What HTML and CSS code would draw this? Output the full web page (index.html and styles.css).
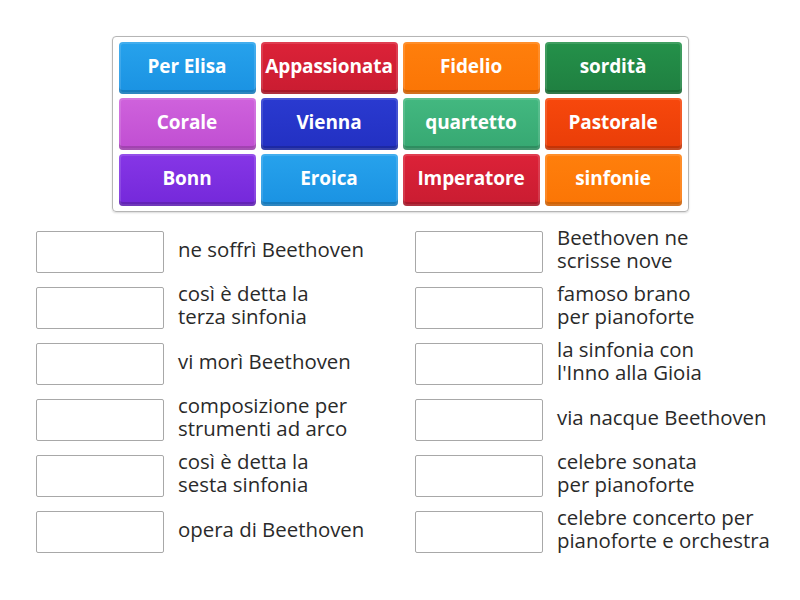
FILE: index.html
```html
<!DOCTYPE html>
<html lang="it">
<head>
<meta charset="utf-8">
<link rel="stylesheet" href="styles.css">
</head>
<body>
<div class="page">
  <div class="bank">
    <div class="tile blue">Per Elisa</div>
    <div class="tile red">Appassionata</div>
    <div class="tile orange">Fidelio</div>
    <div class="tile dgreen">sordità</div>
    <div class="tile pink">Corale</div>
    <div class="tile navy">Vienna</div>
    <div class="tile mint">quartetto</div>
    <div class="tile vermilion">Pastorale</div>
    <div class="tile violet">Bonn</div>
    <div class="tile blue">Eroica</div>
    <div class="tile red">Imperatore</div>
    <div class="tile orange">sinfonie</div>
  </div>
  <div class="targets">
    <div class="item"><div class="slot"></div><div class="label">ne soffrì Beethoven</div></div>
    <div class="item"><div class="slot"></div><div class="label">Beethoven ne<br>scrisse nove</div></div>
    <div class="item"><div class="slot"></div><div class="label">così è detta la<br>terza sinfonia</div></div>
    <div class="item"><div class="slot"></div><div class="label">famoso brano<br>per pianoforte</div></div>
    <div class="item"><div class="slot"></div><div class="label">vi morì Beethoven</div></div>
    <div class="item"><div class="slot"></div><div class="label">la sinfonia con<br>l'Inno alla Gioia</div></div>
    <div class="item"><div class="slot"></div><div class="label">composizione per<br>strumenti ad arco</div></div>
    <div class="item"><div class="slot"></div><div class="label">via nacque Beethoven</div></div>
    <div class="item"><div class="slot"></div><div class="label">così è detta la<br>sesta sinfonia</div></div>
    <div class="item"><div class="slot"></div><div class="label">celebre sonata<br>per pianoforte</div></div>
    <div class="item"><div class="slot"></div><div class="label">opera di Beethoven</div></div>
    <div class="item"><div class="slot"></div><div class="label">celebre concerto per<br>pianoforte e orchestra</div></div>
  </div>
</div>
</body>
</html>
```

FILE: styles.css
```css
html, body {
  margin: 0;
  padding: 0;
  background: #ffffff;
}
body {
  font-family: "Open Sans", "Liberation Sans", sans-serif;
  width: 800px;
  height: 600px;
  overflow: hidden;
}
.page {
  padding-top: 36px;
}
.bank {
  width: 563px;
  margin: 0 auto;
  padding: 5px 6px 5px 6px;
  border: 1px solid #b5b5b5;
  border-radius: 4px;
  box-shadow: 0 1px 2px rgba(0,0,0,0.15);
  display: grid;
  grid-template-columns: repeat(4, 137px);
  grid-auto-rows: 52px;
  column-gap: 5px;
  row-gap: 4px;
}
.tile {
  border-radius: 4px;
  color: #ffffff;
  font-weight: 700;
  font-size: 19px;
  display: flex;
  align-items: center;
  justify-content: center;
  padding-bottom: 4px;
  box-sizing: border-box;
  box-shadow: inset 0 -4px 0 rgba(0,0,0,0.16), inset 0 0 0 2px rgba(255,255,255,0.13);
  letter-spacing: -0.1px;
  white-space: nowrap;
}
.blue { background: linear-gradient(#27a2ec, #1a92e2); }
.red { background: linear-gradient(#dc2238, #c91c31); }
.orange { background: linear-gradient(#ff7f0c, #fb7505); }
.dgreen { background: linear-gradient(#24914a, #1f7f40); }
.pink { background: linear-gradient(#cf62dc, #c04ed2); }
.navy { background: linear-gradient(#2a3ad0, #2230c2); }
.mint { background: linear-gradient(#43b880, #36a872); }
.vermilion { background: linear-gradient(#f7480c, #e93d08); }
.violet { background: linear-gradient(#8636e6, #7428da); }

.targets {
  margin-top: 19px;
  padding-left: 36px;
  display: grid;
  grid-template-columns: 379px 380px;
  grid-auto-rows: 42px;
  row-gap: 14px;
}
.item {
  display: flex;
  align-items: center;
}
.slot {
  width: 126px;
  height: 40px;
  border: 1px solid #a8a8a8;
  border-radius: 2px;
  flex-shrink: 0;
}
.label {
  margin-left: 14px;
  padding-bottom: 6px;
  font-size: 20.4px;
  line-height: 23px;
  color: #2a2a2a;
  white-space: nowrap;
}
```
